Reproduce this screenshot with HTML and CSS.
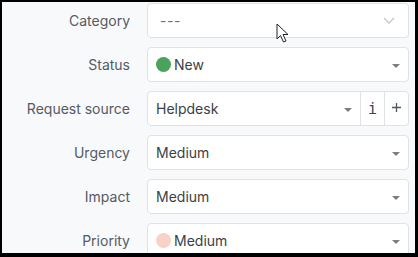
FILE: index.html
```html
<!DOCTYPE html>
<html>
<head>
<meta charset="utf-8">
<link rel="stylesheet" href="styles.css">
</head>
<body>
<div class="panel">
  <div class="form">
    <div class="label">Category</div>
    <div class="field field-plain">
      <span class="muted">---</span>
      <svg class="chev" width="12" height="7" viewBox="0 0 12 7"><path d="M1 1 L6 6 L11 1" fill="none" stroke="#c4c7cc" stroke-width="1.3"/></svg>
    </div>

    <div class="label">Status</div>
    <div class="field">
      <span class="dot dot-green"></span><span class="val">New</span>
      <span class="caret"></span>
    </div>

    <div class="label">Request source</div>
    <div class="field field-group">
      <div class="seg seg-main"><span class="val">Helpdesk</span><span class="caret"></span></div>
      <div class="seg seg-btn info">i</div>
      <div class="seg seg-btn plus"><svg width="11" height="11" viewBox="0 0 11 11"><path d="M5.5 1 V10 M1 5.5 H10" stroke="#50555d" stroke-width="1.3"/></svg></div>
    </div>

    <div class="label">Urgency</div>
    <div class="field"><span class="val">Medium</span><span class="caret"></span></div>

    <div class="label">Impact</div>
    <div class="field"><span class="val">Medium</span><span class="caret"></span></div>

    <div class="label">Priority</div>
    <div class="field">
      <span class="dot dot-peach"></span><span class="val">Medium</span>
      <span class="caret"></span>
    </div>
  </div>
  <svg class="cursor" width="14" height="20" viewBox="0 0 14 20"><path d="M1 1 L1 16 L4.5 12.5 L7.5 19 L10 18 L7 11.5 L12 11.5 Z" fill="#fff" stroke="#222" stroke-width="1"/></svg>
</div>
</body>
</html>
```
FILE: styles.css
```css
html, body { margin: 0; padding: 0; }
body {
  background: #000;
  width: 418px;
  height: 257px;
  padding: 2px 3px 4px 2px;
  box-sizing: border-box;
  font-family: Inter, "Noto Sans", sans-serif;
  font-size: 14px;
}
.panel {
  position: relative;
  background: #f8f9fa;
  height: 251px;
  overflow: hidden;
  padding-top: 1px;
  box-sizing: border-box;
}
.form {
  display: grid;
  grid-template-columns: 128px 262px;
  column-gap: 17px;
  row-gap: 9px;
  grid-auto-rows: 35px;
}
.label {
  text-align: right;
  align-self: center;
  color: #555a64;
}
.field {
  background: #fff;
  border: 1px solid #dfe2e6;
  border-radius: 4px;
  box-sizing: border-box;
  height: 35px;
  display: flex;
  align-items: center;
  padding: 0 8px;
  color: #3b3f46;
}
.field-plain { padding-left: 12px; padding-right: 13px; }
.muted { color: #6c7077; flex: 1; letter-spacing: 0.5px; }
.chev { display: block; margin-top: -1px; }
.val { flex: 1; }
.dot {
  width: 15px; height: 15px; border-radius: 50%;
  margin-right: 3px; flex: none;
}
.dot-green { background: #4aa35a; }
.dot-peach { background: #f8d2c6; }
.caret {
  width: 0; height: 0;
  border-left: 4px solid transparent;
  border-right: 4px solid transparent;
  border-top: 4px solid #7a7d82;
  margin-top: 2px;
}
.field-group { padding: 0; }
.seg { height: 100%; display: flex; align-items: center; }
.seg-main { flex: 1; padding: 0 8px; }
.seg-btn {
  width: 24px;
  justify-content: center;
  border-left: 1px solid #dfe2e6;
  box-sizing: border-box;
}
.info {
  font-family: "DejaVu Sans Mono", monospace;
  font-size: 15px;
  color: #34445f;
}
.plus svg { display: block; margin-top: -3px; }
.cursor {
  position: absolute;
  left: 274px;
  top: 21px;
}
```
